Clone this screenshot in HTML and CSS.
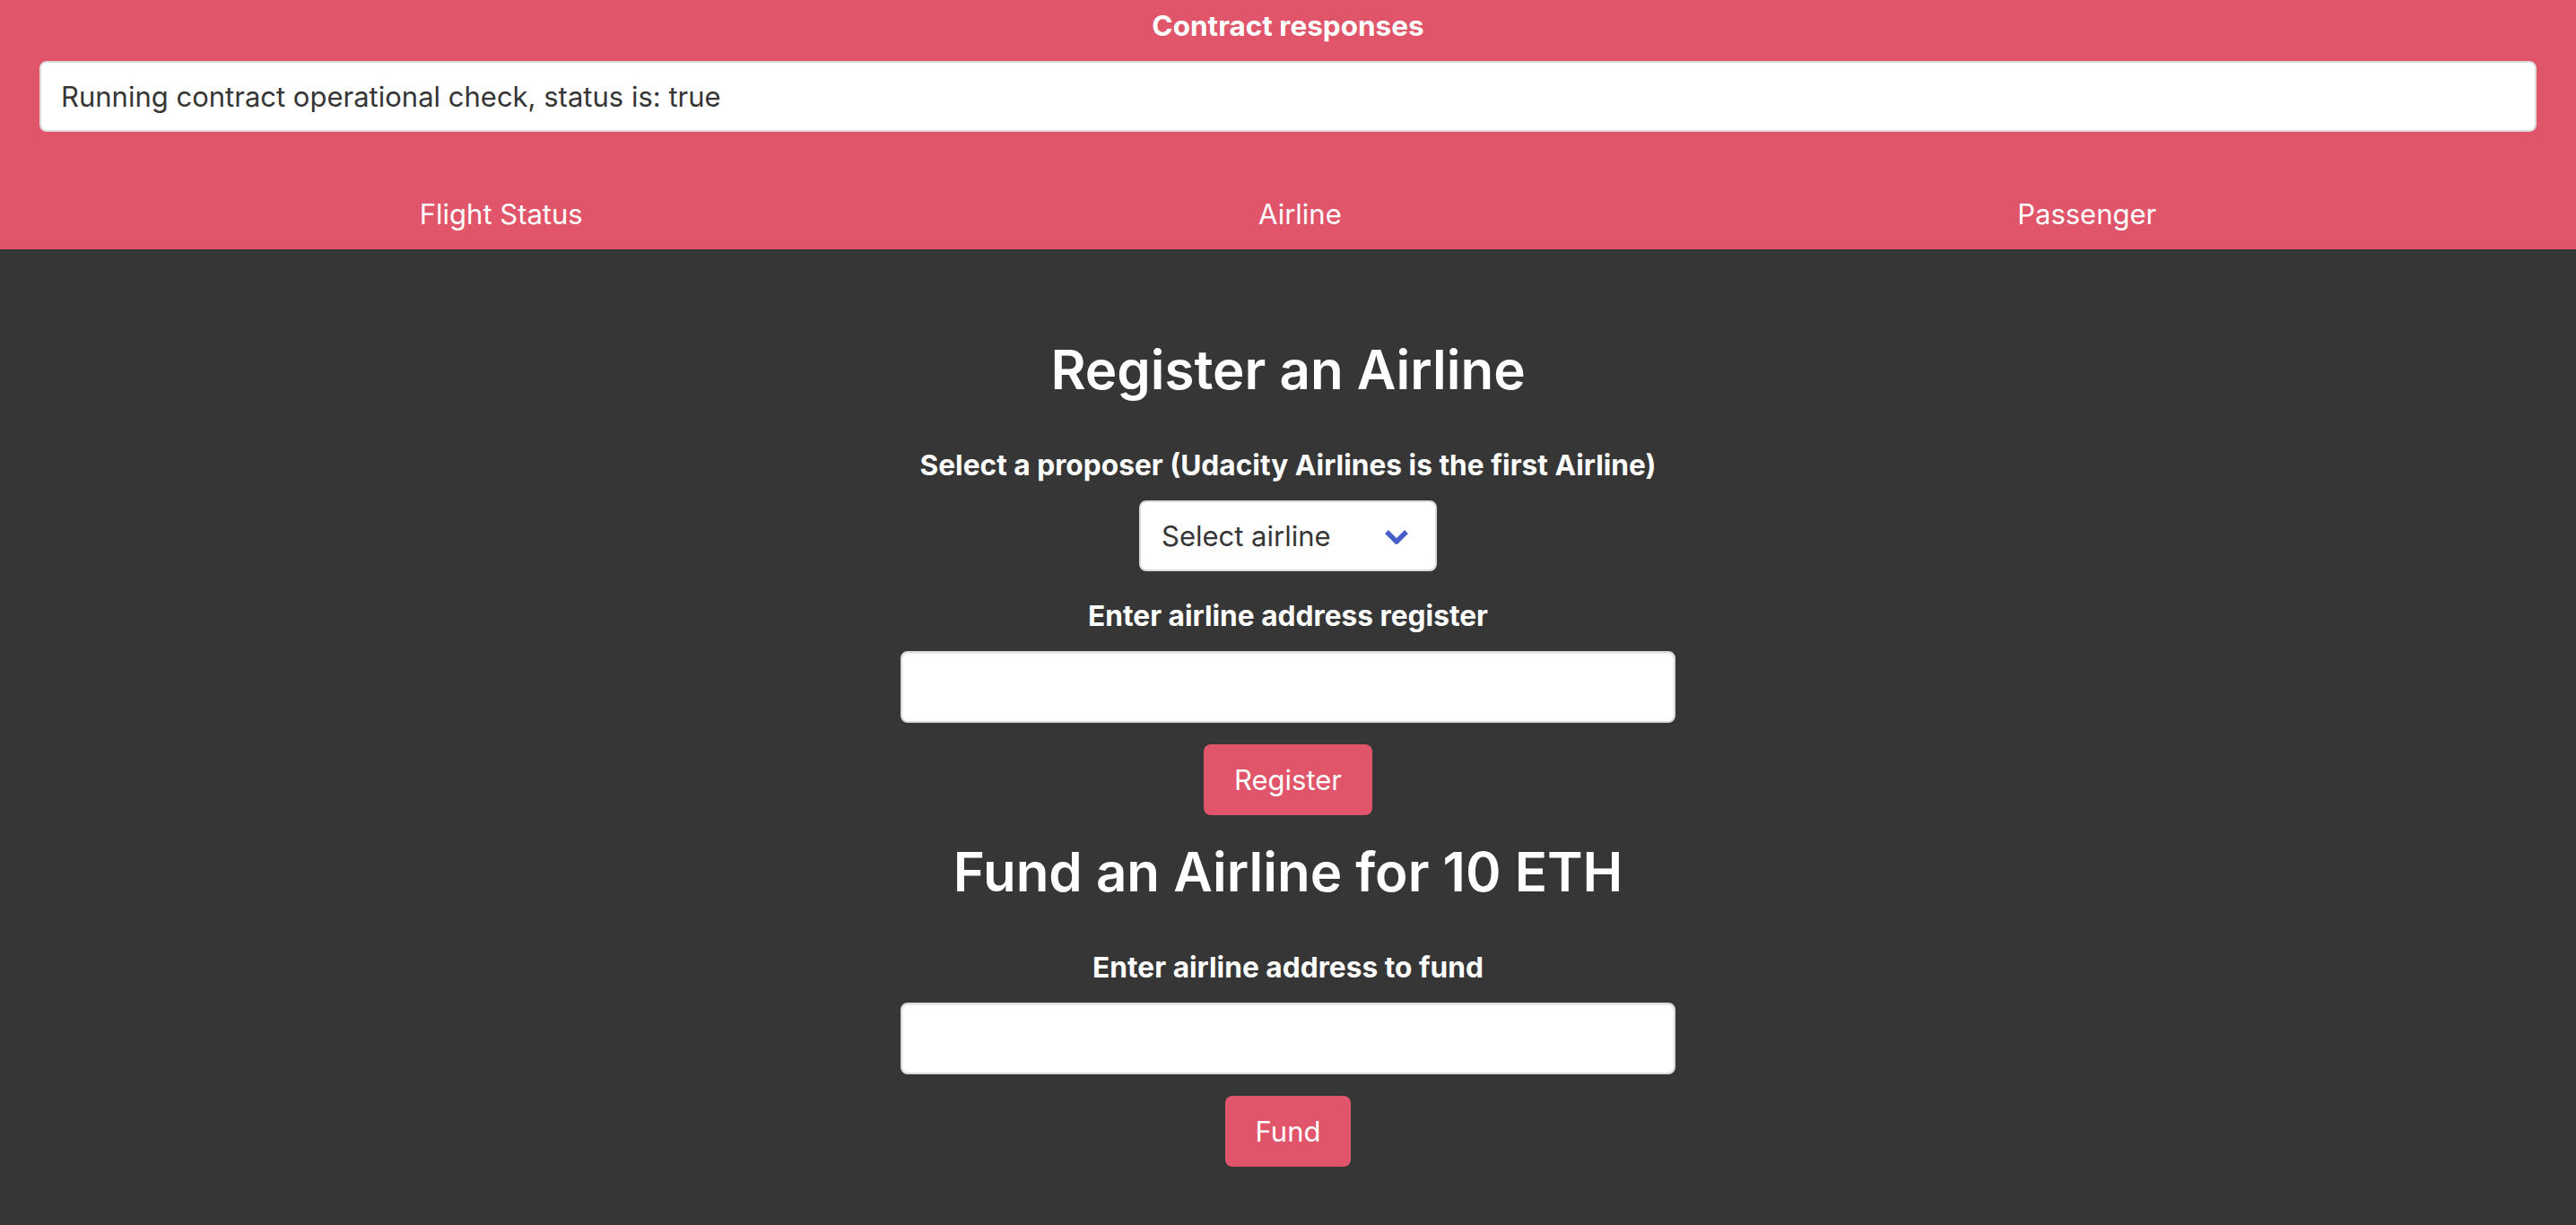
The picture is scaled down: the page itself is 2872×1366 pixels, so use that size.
FILE: index.html
```html
<!DOCTYPE html>
<html lang="en">
<head>
<meta charset="utf-8">
<title>FlightSurety</title>
<link rel="stylesheet" href="styles.css">
</head>
<body>
<header class="top">
  <div class="top-title">Contract responses</div>
  <div class="response-box">Running contract operational check, status is: true</div>
  <nav class="tabs">
    <a class="tab">Flight Status</a>
    <a class="tab">Airline</a>
    <a class="tab">Passenger</a>
  </nav>
</header>
<main class="content">
  <h1 class="title">Register an Airline</h1>
  <label class="label">Select a proposer (Udacity Airlines is the first Airline)</label>
  <div class="select">
    <span>Select airline</span>
    <svg class="chevron" width="28" height="18" viewBox="0 0 28 18"><polyline points="3,3 14,14 25,3" fill="none" stroke="#485fc7" stroke-width="5.5" stroke-linejoin="round"/></svg>
  </div>
  <label class="label label-gap">Enter airline address register</label>
  <div class="input"></div>
  <button class="button">Register</button>
  <h2 class="title title-second">Fund an Airline for 10 ETH</h2>
  <label class="label">Enter airline address to fund</label>
  <div class="input"></div>
  <button class="button">Fund</button>
</main>
</body>
</html>
```
FILE: styles.css
```css
html, body {
  margin: 0;
  padding: 0;
}
body {
  background: #363636;
  font-family: "Inter", "Noto Sans", sans-serif;
  font-size: 31px;
  color: #fff;
  min-height: 1366px;
}
.top {
  background: #e05569;
  padding: 9px 44px 15px 44px;
  display: flex;
  flex-direction: column;
}
.top-title {
  text-align: center;
  font-weight: 700;
  line-height: 40px;
  font-size: 31.5px;
}
.response-box {
  margin-top: 19px;
  height: 79px;
  box-sizing: border-box;
  background: #fff;
  border: 2px solid #dbdbdb;
  border-radius: 8px;
  padding: 0 22px;
  display: flex;
  align-items: center;
  color: #363636;
  font-size: 31px;
}
.tabs {
  margin: 68px 47px 0 47px;
  display: flex;
  justify-content: space-around;
  line-height: 48px;
}
.tab {
  color: #fff;
  font-size: 31px;
}
.content {
  display: flex;
  flex-direction: column;
  align-items: center;
  padding-top: 98px;
}
.title {
  margin: 0;
  font-size: 60px;
  font-weight: 600;
  line-height: 72px;
}
.title-second {
  margin-top: 27px;
}
.label {
  margin-top: 51px;
  font-weight: 700;
  font-size: 31.7px;
  line-height: 40px;
}
.label-gap {
  margin-top: 30px;
}
.select {
  margin-top: 19px;
  width: 332px;
  height: 79px;
  box-sizing: border-box;
  background: #fff;
  border: 2px solid #dbdbdb;
  border-radius: 8px;
  padding: 0 29px 0 23px;
  display: flex;
  align-items: center;
  justify-content: space-between;
  color: #363636;
  font-size: 31px;
}
.chevron {
  display: block;
  margin-top: 2px;
}
.input {
  margin-top: 19px;
  width: 864px;
  height: 80px;
  box-sizing: border-box;
  background: #fff;
  border: 2px solid #dbdbdb;
  border-radius: 8px;
  box-shadow: inset 0 1px 3px rgba(10, 10, 10, 0.08);
}
.button {
  margin-top: 24px;
  height: 79px;
  box-sizing: border-box;
  background: #e05569;
  border: none;
  border-radius: 8px;
  padding: 0 34px;
  color: #fff;
  font-family: "Inter", "Noto Sans", sans-serif;
  font-size: 31px;
}
```
